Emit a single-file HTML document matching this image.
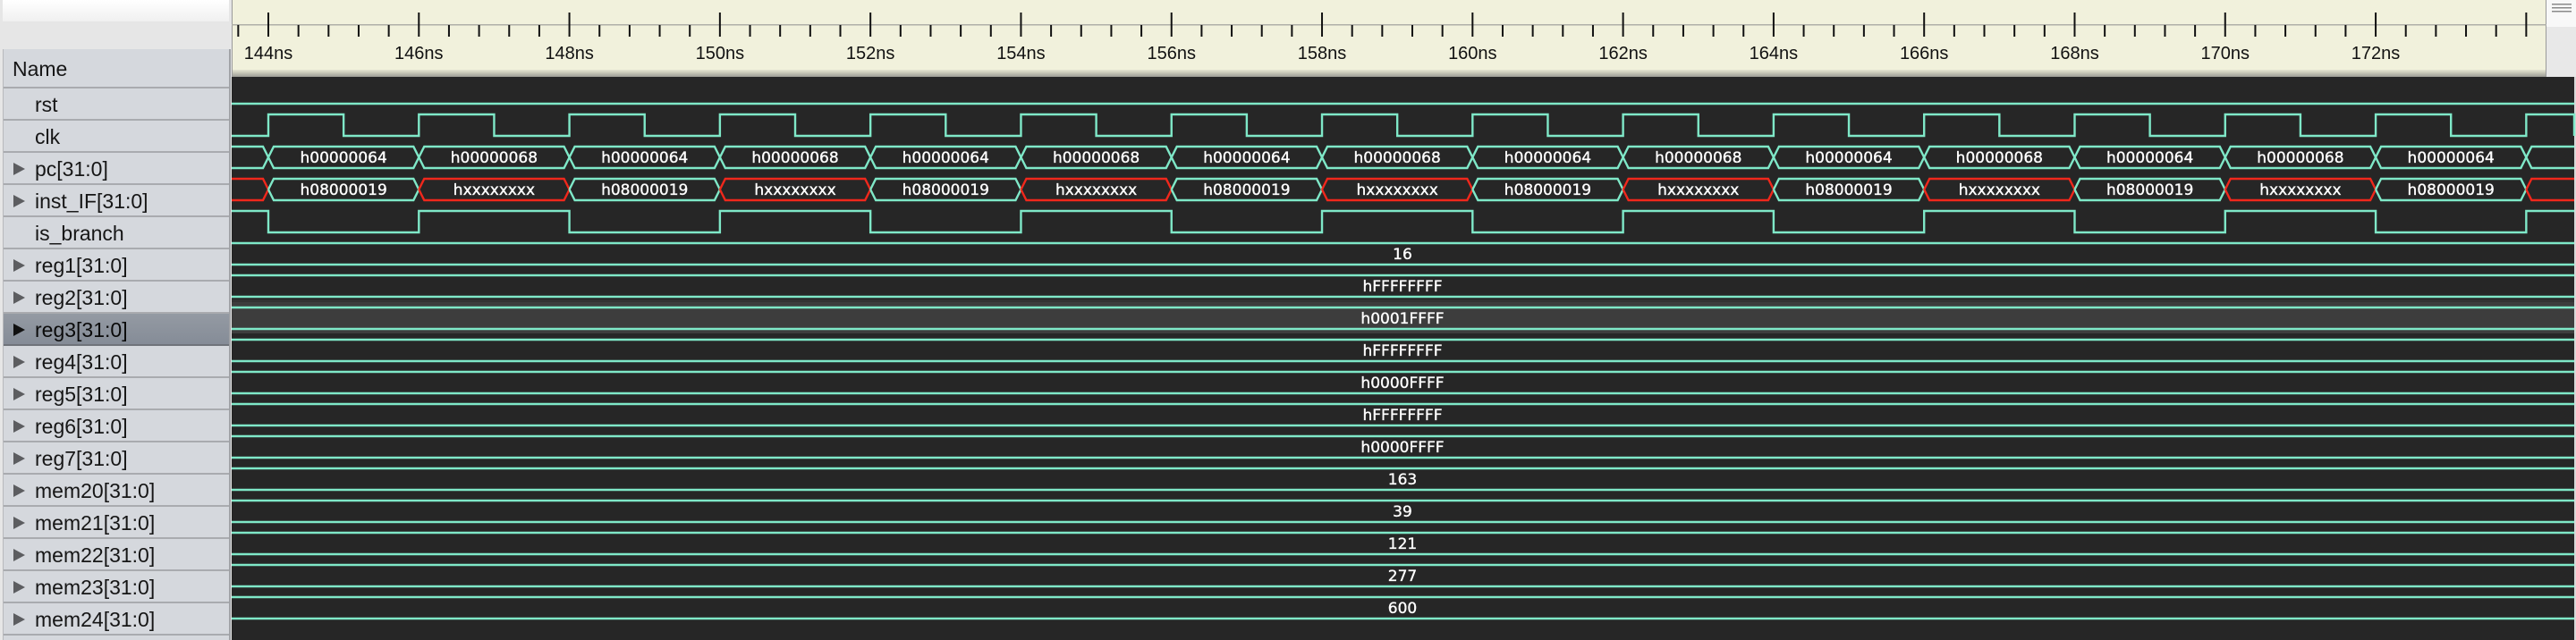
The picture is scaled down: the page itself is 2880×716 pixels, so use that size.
<!DOCTYPE html>
<html><head><meta charset="utf-8">
<style>
html,body{margin:0;padding:0;width:2880px;height:716px;overflow:hidden;background:#e4e4e4;}
#left{position:absolute;left:0;top:0;width:259px;height:716px;background:#e6e6e6;}
#topgrad{position:absolute;left:3px;top:0;width:253px;height:24px;background:linear-gradient(#ffffff,#f0f0f0);}
#names{position:absolute;left:3px;top:55px;width:252px;height:661px;background:#d5d8dd;border-right:2px solid #a0a2a6;border-left:1px solid #b8b9bc;}
.row{position:absolute;left:0;width:252px;height:34px;border-bottom:2px solid #a9abaf;font-family:"Liberation Sans",sans-serif;font-size:23px;color:#161616;line-height:36px;}
.row span{position:absolute;left:35px;top:0;}
.tri{position:absolute;left:11px;top:11px;width:0;height:0;border-top:7px solid transparent;border-bottom:7px solid transparent;border-left:13px solid #5c5d60;}
.sel{background:linear-gradient(#949aa3,#858c97);border-bottom-color:#6f737a;}
.sel .tri{border-left-color:#111;}
.sel span{color:#0a0a0a;}
svg{position:absolute;left:0;top:0;}
</style></head><body>
<div id="left"><div id="topgrad"></div>
<div id="names">
<div class="row" style="top:0;height:42px;line-height:44px;"><span style="left:10px">Name</span></div>
</div></div>
<svg id="w" width="2880" height="716" xmlns="http://www.w3.org/2000/svg"></svg>
<script>
const names=[["rst",0],["clk",0],["pc[31:0]",1],["inst_IF[31:0]",1],["is_branch",0],["reg1[31:0]",1],["reg2[31:0]",1],["reg3[31:0]",1],["reg4[31:0]",1],["reg5[31:0]",1],["reg6[31:0]",1],["reg7[31:0]",1],["mem20[31:0]",1],["mem21[31:0]",1],["mem22[31:0]",1],["mem23[31:0]",1],["mem24[31:0]",1]];
let h='';
names.forEach((n,i)=>{h+=`<div class="row${i==7?' sel':''}" style="top:${44+i*36}px">${n[1]?'<div class="tri"></div>':''}<span>${n[0]}</span></div>`;});
document.getElementById('names').innerHTML+=h;
const X0=259,X1=2878,T0=300,P=168.29;
let s='';
s+=`<rect x="2847" y="0" width="33" height="86" fill="#e8e8e8"/><rect x="2847" y="0" width="33" height="30" fill="#f8f8f8"/>`;
[4,8,12].forEach(y=>s+=`<rect x="2853" y="${y}" width="22" height="1.5" fill="#8a8a8a"/>`);
s+=`<rect x="${X0}" y="0" width="${2847-X0}" height="86" fill="#f1f1dc"/>`;
s+=`<rect x="${X0}" y="78" width="${2847-X0}" height="8" fill="url(#rg)"/>`;
s+=`<defs><linearGradient id="rg" x1="0" y1="0" x2="0" y2="1"><stop offset="0" stop-color="#e6e6d2"/><stop offset="1" stop-color="#9c9c94"/></linearGradient></defs>`;
s+=`<rect x="${X0}" y="0" width="1" height="86" fill="#9a9a9a"/><rect x="2846" y="0" width="1" height="86" fill="#9a9a9a"/>`;
s+=`<rect x="${X0}" y="27" width="${2847-X0}" height="1.5" fill="#b0b0a8"/>`;
for(let k=-1;k<80;k++){const x=T0+k*P/5;if(x>2840)break;if(x<X0)continue;const maj=((k%5)+5)%5==0;
 s+=`<rect x="${x-1}" y="${maj?14:28}" width="2" height="${maj?27:13}" fill="#111"/>`;
 if(maj){const ns=144+2*(k/5);if(ns<=172)s+=`<text x="${x}" y="66" font-family="Liberation Sans,sans-serif" font-size="20" text-anchor="middle" fill="#111">${ns}ns</text>`;}}
s+=`<rect x="${X0}" y="86" width="${X1-X0}" height="630" fill="#262626"/>`;
s+=`<rect x="${X1}" y="86" width="2" height="630" fill="#d8d8d8"/>`;
s+=`<rect x="${X0}" y="335" width="${X1-X0}" height="3" fill="#333"/><rect x="${X0}" y="338" width="${X1-X0}" height="35" fill="#3d3d3d"/>`;
const C='#7fe8c8',R='#f0281c';
const L=(d,c)=>s+=`<path d="${d}" fill="none" stroke="${c||C}" stroke-width="2.4"/>`;
L(`M${X0} 116H${X1}`);
let d=`M${X0} 152`,e=`M${X0} 236`;
for(let k=0;k<16;k++){const x=T0+k*P;if(x>X1)break;d+=`H${x}V128H${Math.min(x+P/2,X1)}V152`;}
d+=`H${X1}`;L(d);
let hi=true;e=`M${X0} 236`;
for(let k=0;k<16;k++){const x=T0+k*P;if(x>X1)break;e+=`H${x}V${hi?260:236}`;hi=!hi;}
e+=`H${X1}`;L(e);
const txt=(x,y,t,fs)=>s+=`<text x="${x}" y="${y}" font-family="DejaVu Sans,sans-serif" font-size="${fs}" text-anchor="middle" fill="#fff" stroke="#fff" stroke-width="0.35">${t}</text>`;
function bus(top,segs){const b=top+24,m=top+12;
 for(let i=0;i<segs.length;i++){const [a,z,t,red]=segs[i];const c=red?R:C;
  let p=a<X0?`M${X0} ${top}`:`M${a} ${m}L${a+6} ${top}`;
  p+=z>X1?`H${X1}`:`H${z-6}L${z} ${m}`;
  let q=a<X0?`M${X0} ${b}`:`M${a} ${m}L${a+6} ${b}`;
  q+=z>X1?`H${X1}`:`H${z-6}L${z} ${m}`;
  L(p,c);L(q,c);
  if(t&&a>=X0&&z<=X1)txt((a+z)/2,m+6,t,17);}}
let pc=[],ins=[];
for(let k=-1;k<16;k++){const a=T0+k*P,z=a+P;if(a>X1)break;
 pc.push([a,z,k%2==0?'h00000064':'h00000068']);ins.push([a,z,k%2==0?'h08000019':'hxxxxxxxx',k%2!=0]);}
bus(164,pc);bus(200,ins);
const vals=['16','hFFFFFFFF','h0001FFFF','hFFFFFFFF','h0000FFFF','hFFFFFFFF','h0000FFFF','163','39','121','277','600'];
vals.forEach((v,i)=>{const t=272+i*36;L(`M${X0} ${t}H${X1}`);L(`M${X0} ${t+24}H${X1}`);txt(1568,t+18,v,17);});
document.getElementById('w').innerHTML=s;
</script>
</body></html>
